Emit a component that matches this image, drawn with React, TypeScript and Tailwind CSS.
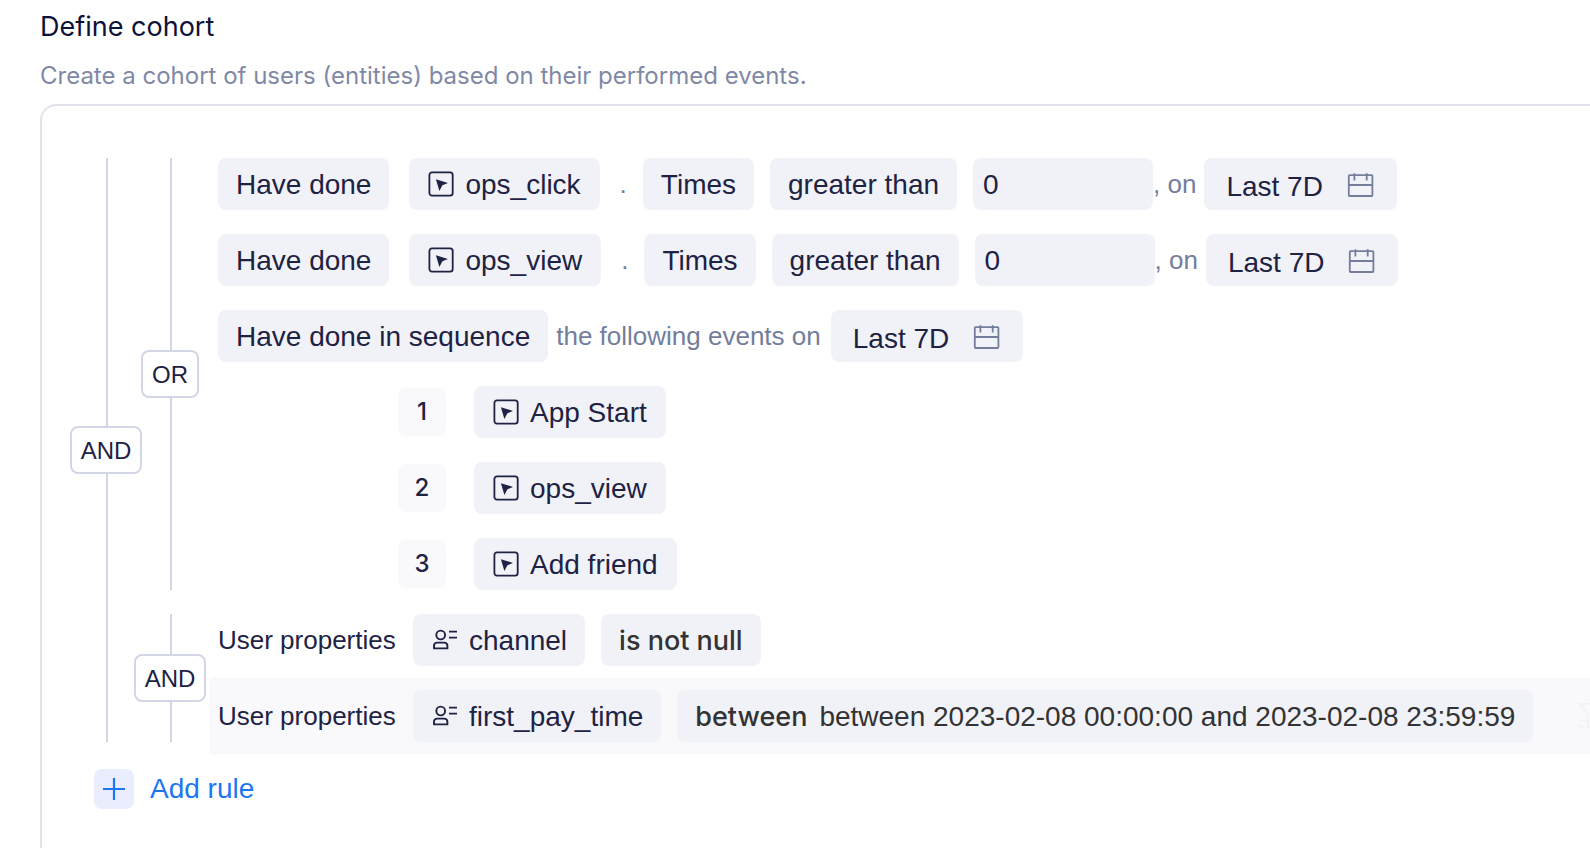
import React from "react";

function EventIcon() {
  return (
    <svg viewBox="0 0 28 28" className="size-7 shrink-0" fill="none" aria-hidden="true">
      <rect x="2.4" y="2.4" width="23.3" height="23.3" rx="2.6" stroke="#1e2243" strokeWidth="1.8" />
      <path d="M8.9 9.2 21 12.9l-5.6 2.3L12.4 21Z" fill="#1e2243" />
    </svg>
  );
}

function PropertyIcon() {
  return (
    <svg viewBox="0 0 28 28" className="size-7 shrink-0" fill="none" stroke="#1e2243" strokeWidth="1.9" aria-hidden="true">
      <circle cx="9.7" cy="9" r="4.4" />
      <path d="M3 22.4v-2.6a3.2 3.2 0 0 1 3.2-3.2h7a3.2 3.2 0 0 1 3.2 3.2v2.6Z" strokeLinejoin="round" />
      <path d="M18 5.7h8M18 11.7h8" strokeWidth="1.8" />
    </svg>
  );
}

function CalendarIcon() {
  return (
    <svg viewBox="0 0 28 28" className="size-7 shrink-0" fill="none" stroke="#747e9c" strokeWidth="1.8" aria-hidden="true">
      <rect x="1.8" y="5.2" width="23.6" height="20.8" rx="0.8" />
      <path d="M1.8 15h23.6M7.4 3.2v7.2M19.7 3.2v7.2" />
    </svg>
  );
}

function FilterIcon() {
  return (
    <svg viewBox="0 0 28 28" className="size-7 shrink-0" fill="none" stroke="#f2f3f7" strokeWidth="2" aria-hidden="true">
      <path d="M3 2h23l-7 11v12h-8V13Z" />
      <path d="M2.5 18.5h6M.5 24.5h6" />
    </svg>
  );
}

function Chip({ children }: { children: React.ReactNode }) {
  return (
    <button type="button" className="flex h-13 shrink-0 items-center rounded-lg bg-[#f1f2f8] px-4.5 pt-0.5 text-[28px] whitespace-nowrap">
      {children}
    </button>
  );
}

function EventChip({ name }: { name: string }) {
  return (
    <button type="button" className="flex h-13 shrink-0 items-center gap-2.5 rounded-lg bg-[#f1f2f8] pr-[19px] pl-4.5 text-[28px] whitespace-nowrap">
      <EventIcon />
      <span className="pt-0.5">{name}</span>
    </button>
  );
}

function PropertyChip({ name }: { name: string }) {
  return (
    <button type="button" className="flex h-13 shrink-0 items-center gap-2.5 rounded-lg bg-[#f1f2f8] px-4.5 text-[28px] whitespace-nowrap">
      <PropertyIcon />
      <span className="pt-0.5">{name}</span>
    </button>
  );
}

function DateChip() {
  return (
    <button type="button" className="flex h-13 shrink-0 items-center gap-6 rounded-lg bg-[#f1f2f8] px-5.5 text-[28px] whitespace-nowrap">
      <span className="pt-1.5">Last 7D</span>
      <CalendarIcon />
    </button>
  );
}

function Relation({ label }: { label: string }) {
  return (
    <div className="my-3 flex w-full flex-col items-center">
      <div className="w-0.5 flex-1 bg-[#d3d6e4]" />
      <button
        type="button"
        className="mr-0.5 h-12 shrink-0 rounded-lg border-2 border-[#d3d6e4] bg-white px-[9px] pt-0.5 text-2xl"
      >
        {label}
      </button>
      <div className="w-0.5 flex-1 bg-[#d3d6e4]" />
    </div>
  );
}

function Group({ label, children }: { label: string; children: React.ReactNode }) {
  return (
    <div className="flex">
      <div className="mr-2 flex w-15.5 shrink-0">
        <Relation label={label} />
      </div>
      <div className="min-w-0 flex-1">{children}</div>
    </div>
  );
}

function EventRule({ name }: { name: string }) {
  return (
    <div className="flex items-center px-2 py-3">
      <Chip>Have done</Chip>
      <div className="ml-5 flex items-center gap-5">
        <EventChip name={name} />
        <span className="text-[26px] text-[#747e9c]">.</span>
      </div>
      <div className="ml-4 flex items-center gap-4">
        <Chip>Times</Chip>
        <Chip>greater than</Chip>
        <input
          type="text"
          aria-label={`${name} times`}
          defaultValue="0"
          className="h-13 w-45 rounded-lg bg-[#f1f2f8] px-2.5 pt-0.5 text-[28px] outline-none"
        />
      </div>
      <span className="mr-2 text-[26px] whitespace-nowrap text-[#747e9c]">, on</span>
      <DateChip />
    </div>
  );
}

function SequenceStep({ step, name }: { step: number; name: string }) {
  return (
    <div className="flex items-center gap-7 py-3 pl-47">
      <span className="flex size-12 items-center justify-center rounded-lg bg-[#f9f9fc] font-['Inter',sans-serif] text-2xl font-medium">
        {step}
      </span>
      <EventChip name={name} />
    </div>
  );
}

export default function App() {
  return (
    <main className="flex min-h-screen flex-col overflow-hidden bg-white pl-10 font-['Liberation_Sans',Arial,sans-serif] text-[#1e2243]">
      <h1 className="font-['Inter',sans-serif] text-[27px] leading-[54px] text-[#0d1238]">Define cohort</h1>
      <p className="mb-1.5 font-['Inter',sans-serif] text-[24px] leading-[44px] text-[#7f89a5]">
        Create a cohort of users (entities) based on their performed events.
      </p>
      <section className="flex-1 rounded-tl-2xl border-t-2 border-l-2 border-[#e0e3eb] pt-10 pb-9">
        <div className="flex pl-8">
          <div className="flex w-16.5 shrink-0">
            <Relation label="AND" />
          </div>
          <div className="min-w-0 flex-1">
            <Group label="OR">
              <EventRule name="ops_click" />
              <EventRule name="ops_view" />
              <div className="flex items-center gap-2 px-2 py-3">
                <Chip>Have done in sequence</Chip>
                <span className="pr-0.5 text-[26px] whitespace-nowrap text-[#747e9c]">the following events on</span>
                <DateChip />
              </div>
              <SequenceStep step={1} name="App Start" />
              <SequenceStep step={2} name="ops_view" />
              <SequenceStep step={3} name="Add friend" />
            </Group>
            <Group label="AND">
              <div className="flex items-center gap-4 px-2 py-3">
                <span className="w-[179px] shrink-0 text-[26px] whitespace-nowrap">User properties</span>
                <PropertyChip name="channel" />
                <Chip>
                  <span className="font-['Inter',sans-serif] text-[27px] font-medium text-[#333]">is not null</span>
                </Chip>
              </div>
              <div className="flex items-center gap-4 bg-[#f9f9fc] px-2 py-3">
                <span className="w-[179px] shrink-0 text-[26px] whitespace-nowrap">User properties</span>
                <PropertyChip name="first_pay_time" />
                <Chip>
                  <span className="mr-3 font-['Inter',sans-serif] text-[27px] font-medium text-[#333]">between</span>
                  <span className="text-[#333]">between 2023-02-08 00:00:00 and 2023-02-08 23:59:59</span>
                </Chip>
                <button type="button" aria-label="Filter" className="ml-7 shrink-0">
                  <FilterIcon />
                </button>
              </div>
            </Group>
          </div>
        </div>
        <button type="button" className="mt-3.5 ml-13 flex items-center gap-4 text-[28px] text-[#1f76f2]">
          <span className="flex size-10 items-center justify-center rounded-lg bg-[#e9edfd]">
            <svg viewBox="0 0 24 24" className="size-6" stroke="currentColor" strokeWidth="2.2" aria-hidden="true">
              <path d="M12 1v22M1 12h22" />
            </svg>
          </span>
          Add rule
        </button>
      </section>
    </main>
  );
}
